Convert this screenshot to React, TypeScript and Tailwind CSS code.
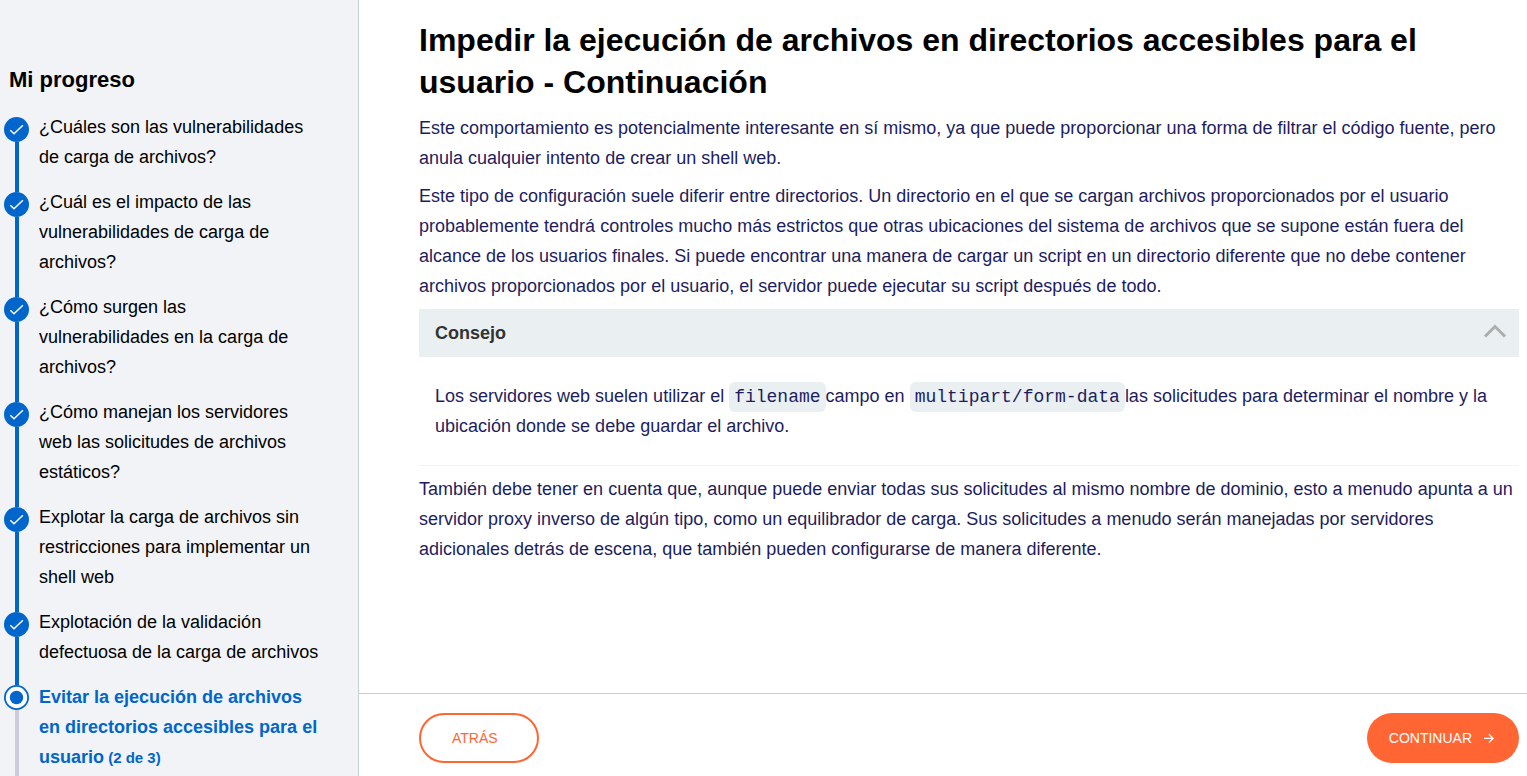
import React, { useState } from "react";

type Step = { title: string; state: "done" | "current"; note?: string };

const steps: Step[] = [
  { title: "¿Cuáles son las vulnerabilidades de carga de archivos?", state: "done" },
  { title: "¿Cuál es el impacto de las vulnerabilidades de carga de archivos?", state: "done" },
  { title: "¿Cómo surgen las vulnerabilidades en la carga de archivos?", state: "done" },
  { title: "¿Cómo manejan los servidores web las solicitudes de archivos estáticos?", state: "done" },
  { title: "Explotar la carga de archivos sin restricciones para implementar un shell web", state: "done" },
  { title: "Explotación de la validación defectuosa de la carga de archivos", state: "done" },
  {
    title: "Evitar la ejecución de archivos en directorios accesibles para el usuario",
    state: "current",
    note: "(2 de 3)",
  },
];

function DoneMarker() {
  return (
    <svg className="block size-[25px] shrink-0" viewBox="0 0 25 25" aria-hidden="true">
      <circle cx="12.5" cy="12.5" r="12.5" fill="#0066cc" />
      <path d="M6.3 13.3 L10 16.8 L18.9 8.3" fill="none" stroke="#fff" strokeWidth="1.5" />
    </svg>
  );
}

function CurrentMarker() {
  return (
    <svg className="block size-[25px] shrink-0" viewBox="0 0 25 25" aria-hidden="true">
      <circle cx="12.5" cy="12.5" r="11.6" fill="#fff" stroke="#0066cc" strokeWidth="1.8" />
      <circle cx="12.5" cy="12.5" r="6.7" fill="#0066cc" />
    </svg>
  );
}

function StepItem({ step, first }: { step: Step; first: boolean }) {
  const current = step.state === "current";
  return (
    <li className="flex gap-[10px]">
      <div className="flex w-[25px] shrink-0 flex-col">
        <div className={`ml-[11px] w-1 ${current ? "h-[3px]" : "h-[5px]"} ${first ? "bg-transparent" : "bg-[#0066cc]"}`} />
        {current ? <CurrentMarker /> : <DoneMarker />}
        <div className={`ml-[11px] w-1 flex-1 ${current ? "bg-[#ccccdd]" : "bg-[#0066cc]"}`} />
      </div>
      <a
        href="#paso"
        aria-current={current ? "step" : undefined}
        className={`mb-[15px] flex-1 text-lg leading-[30px] ${current ? "font-bold text-[#0066cc]" : "text-black"}`}
      >
        {step.title}
        {step.note && <span className="text-[15px]"> {step.note}</span>}
      </a>
    </li>
  );
}

function Code({ children }: { children: React.ReactNode }) {
  return (
    <code className="rounded-md bg-[#eaeff2] px-[5px] py-[5px] align-baseline font-['Liberation_Mono',monospace] text-lg leading-5">
      {children}
    </code>
  );
}

export default function App() {
  const [open, setOpen] = useState(true);
  return (
    <div className="flex h-screen bg-white font-['Liberation_Sans',Arial,sans-serif] text-lg leading-[30px]">
      <aside className="w-[359px] shrink-0 overflow-hidden border-r border-[#c5cfd0] bg-[#f1f3f7] pt-[65px] pr-[39px] pl-1">
        <h2 className="mb-[17px] pl-[5px] text-[22px] leading-[30px] font-bold text-black">Mi progreso</h2>
        <ol>
          {steps.map((step, i) => (
            <StepItem key={step.title} step={step} first={i === 0} />
          ))}
        </ol>
      </aside>

      <div className="flex min-w-0 flex-1 flex-col">
        <main className="flex min-h-0 flex-1 flex-col gap-2 overflow-hidden pt-[19px] pr-2 pl-[60px] text-[#1d1d5e]">
          <h1 className="mb-[2px] text-[32px] leading-[42px] font-bold text-black">
            Impedir la ejecución de archivos en directorios accesibles para el usuario - Continuación
          </h1>
          <p>
            Este comportamiento es potencialmente interesante en sí mismo, ya que puede proporcionar una forma de filtrar
            el código fuente, pero anula cualquier intento de crear un shell web.
          </p>
          <p>
            Este tipo de configuración suele diferir entre directorios. Un directorio en el que se cargan archivos
            proporcionados por el usuario probablemente tendrá controles mucho más estrictos que otras ubicaciones del
            sistema de archivos que se supone están fuera del alcance de los usuarios finales. Si puede encontrar una
            manera de cargar un script en un directorio diferente que no debe contener archivos proporcionados por el
            usuario, el servidor puede ejecutar su script después de todo.
          </p>
          <section className="border-b border-[#f3f3f4]">
            <button
              type="button"
              aria-expanded={open}
              onClick={() => setOpen(!open)}
              className="flex h-12 w-full items-center justify-between bg-[#eaeff2] pr-3 pl-4 text-left font-bold text-[#333332]"
            >
              Consejo
              <svg
                className={`h-6 w-6 ${open ? "" : "rotate-180"}`}
                viewBox="0 0 24 24"
                fill="none"
                stroke="#adadad"
                strokeWidth="3"
                aria-hidden="true"
              >
                <path d="M2 15.5 L12 5.5 L22 15.5" />
              </svg>
            </button>
            {open && (
              <p className="px-4 py-6">
                Los servidores web suelen utilizar el <Code>filename</Code>campo en <Code>multipart/form-data</Code>las
                solicitudes para determinar el nombre y la ubicación donde se debe guardar el archivo.
              </p>
            )}
          </section>
          <p>
            También debe tener en cuenta que, aunque puede enviar todas sus solicitudes al mismo nombre de dominio, esto a
            menudo apunta a un servidor proxy inverso de algún tipo, como un equilibrador de carga. Sus solicitudes a
            menudo serán manejadas por servidores adicionales detrás de escena, que también pueden configurarse de manera
            diferente.
          </p>
        </main>

        <footer className="flex shrink-0 items-center justify-between border-t border-[#cccccc] pt-[19px] pr-2 pb-[13px] pl-[60px] text-sm">
          <button
            type="button"
            className="h-[50px] rounded-full border-2 border-[#ff6633] bg-white pr-[39px] pl-[31px] text-[#ff6633]"
          >
            ATRÁS
          </button>
          <button
            type="button"
            className="flex h-[50px] items-center gap-[11px] rounded-full bg-[#ff6633] pr-6 pl-[22px] text-white"
          >
            CONTINUAR
            <svg
              className="h-3 w-3"
              viewBox="0 0 12 12"
              fill="none"
              stroke="currentColor"
              strokeWidth="1.3"
              aria-hidden="true"
            >
              <path d="M1 6.4 H10 M5.9 2.2 L10.1 6.4 L5.9 10.6" />
            </svg>
          </button>
        </footer>
      </div>
    </div>
  );
}
